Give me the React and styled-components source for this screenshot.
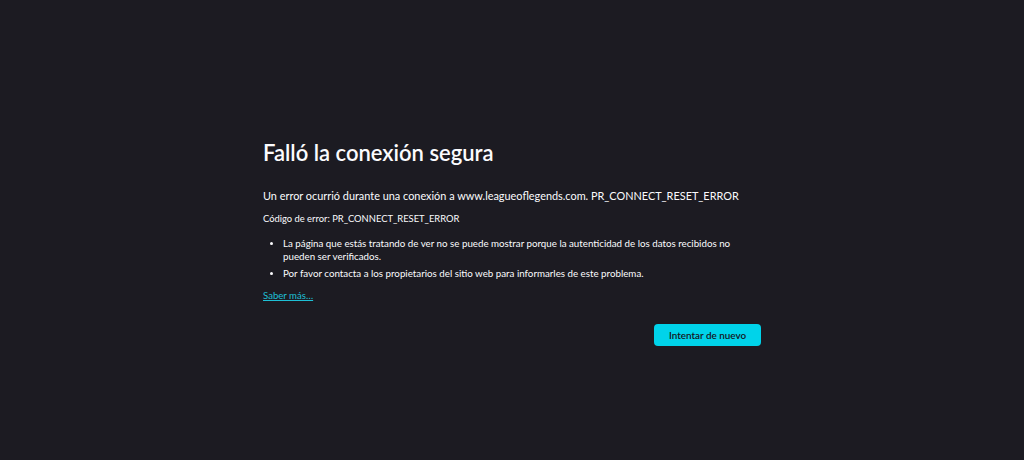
import React from "react";
import styled, { createGlobalStyle } from "styled-components";

const Global = createGlobalStyle`
  html, body {
    margin: 0;
    padding: 0;
    background: #1c1b22;
  }
  body {
    font-family: Lato, "Open Sans", sans-serif;
    color: #fbfbfe;
  }
`;

const Page = styled.div`
  height: 460px;
  display: flex;
  justify-content: center;
  padding-top: 138px;
  box-sizing: border-box;
`;

const Container = styled.div`
  width: 498px;
  display: flex;
  flex-direction: column;
`;

const Title = styled.h1`
  margin: 0 0 20px;
  font-size: 22px;
  font-weight: 600;
  line-height: 30px;
`;

const Lead = styled.p`
  margin: 0 0 7px;
  font-size: 10.9px;
  line-height: 16px;
`;

const Code = styled.p`
  margin: 0 0 10px;
  font-size: 9.4px;
  line-height: 16px;
`;

const List = styled.ul`
  margin: 0 0 8px;
  padding-left: 20px;
  font-size: 9.75px;
  line-height: 13px;
`;

const Item = styled.li`
  margin-bottom: 4px;
  &:last-child {
    margin-bottom: 0;
  }
  &::marker {
    font-size: 9px;
  }
`;

const Link = styled.a`
  color: #1ec0d6;
  font-size: 9.6px;
  line-height: 16px;
  text-decoration: underline;
  align-self: flex-start;
  cursor: pointer;
`;

const Actions = styled.div`
  display: flex;
  justify-content: flex-end;
  margin-top: 20px;
`;

const Button = styled.button`
  background: #00d3ea;
  color: #15141a;
  border: none;
  border-radius: 4px;
  height: 22px;
  width: 107px;
  padding: 0;
  font-family: inherit;
  font-size: 9.9px;
  font-weight: 600;
`;

export default function App() {
  return (
    <>
      <Global />
      <Page>
        <Container>
          <Title>Falló la conexión segura</Title>
          <Lead>
            Un error ocurrió durante una conexión a www.leagueoflegends.com. PR_CONNECT_RESET_ERROR
          </Lead>
          <Code>Código de error: PR_CONNECT_RESET_ERROR</Code>
          <List>
            <Item>
              La página que estás tratando de ver no se puede mostrar porque la autenticidad de los datos recibidos no pueden ser verificados.
            </Item>
            <Item>
              Por favor contacta a los propietarios del sitio web para informarles de este problema.
            </Item>
          </List>
          <Link>Saber más…</Link>
          <Actions>
            <Button>Intentar de nuevo</Button>
          </Actions>
        </Container>
      </Page>
    </>
  );
}
